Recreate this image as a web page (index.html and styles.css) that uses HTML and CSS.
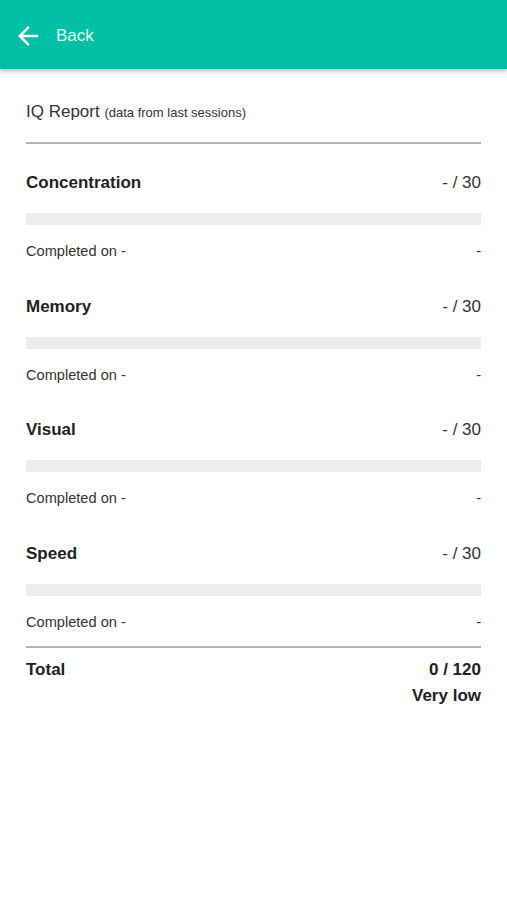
FILE: index.html
```html
<!DOCTYPE html>
<html>
	<head>
		<meta charset="UTF-8">
		<title>IQ Report</title>
		<link rel="stylesheet" href="styles.css">
	</head>
	<body>
		<div class="topbar">
			<svg class="back-icon" viewBox="0 0 24 24" width="30" height="30">
				<path d="M20 11H7.83l5.59-5.59L12 4l-8 8 8 8 1.41-1.41L7.83 13H20v-2z" fill="#fff"/>
			</svg>
			<span class="back-text">Back</span>
		</div>
		<div class="content">
			<div class="report-title">IQ Report <small>(data from last sessions)</small></div>

			<div class="section first">
				<div class="row head"><span>Concentration</span><span class="score">- / 30</span></div>
				<div class="bar"></div>
				<div class="row info"><span>Completed on -</span><span>-</span></div>
			</div>
			<div class="section">
				<div class="row head"><span>Memory</span><span class="score">- / 30</span></div>
				<div class="bar"></div>
				<div class="row info"><span>Completed on -</span><span>-</span></div>
			</div>
			<div class="section">
				<div class="row head"><span>Visual</span><span class="score">- / 30</span></div>
				<div class="bar"></div>
				<div class="row info"><span>Completed on -</span><span>-</span></div>
			</div>
			<div class="section last">
				<div class="row head"><span>Speed</span><span class="score">- / 30</span></div>
				<div class="bar"></div>
				<div class="row info"><span>Completed on -</span><span>-</span></div>
			</div>

			<div class="total">
				<span>Total</span>
				<div class="total-right">
					<div>0 / 120</div>
					<div>Very low</div>
				</div>
			</div>
		</div>
	</body>
</html>
```
FILE: styles.css
```css
*{
	margin: 0;
	padding: 0;
	box-sizing: border-box;
}
body{
	font-family: "Liberation Sans", Arial, sans-serif;
	background: #fff;
	color: #222;
}
.topbar{
	height: 69px;
	background: #00bfa5;
	display: flex;
	align-items: center;
	padding-left: 13px;
	padding-top: 2px;
	box-shadow: 0 2px 5px rgba(0,0,0,0.28);
}
.back-icon{
	display: block;
}
.back-text{
	margin-left: 13px;
	font-size: 17px;
	color: #e3fbf5;
}
.content{
	padding: 31px 26px 0;
}
.report-title{
	font-size: 17px;
	line-height: 24px;
	color: #333;
	padding-bottom: 17px;
	border-bottom: 2px solid #b5b5b5;
}
.report-title small{
	font-size: 13px;
}
.section{
	padding-top: 33.5px;
}
.section.first{
	padding-top: 27px;
}
.section.last{
	padding-bottom: 14px;
	border-bottom: 2px solid #b5b5b5;
}
.row{
	display: flex;
	justify-content: space-between;
}
.head{
	font-size: 17px;
	line-height: 24px;
	font-weight: bold;
}
.head .score{
	font-weight: normal;
	color: #333;
}
.bar{
	height: 12px;
	margin-top: 18px;
	background: #eeeded;
}
.info{
	margin-top: 16px;
	font-size: 14.6px;
	line-height: 20px;
	color: #333;
}
.total{
	display: flex;
	justify-content: space-between;
	padding-top: 9px;
	font-size: 17px;
	line-height: 26px;
	font-weight: bold;
}
.total-right{
	text-align: right;
}
```
